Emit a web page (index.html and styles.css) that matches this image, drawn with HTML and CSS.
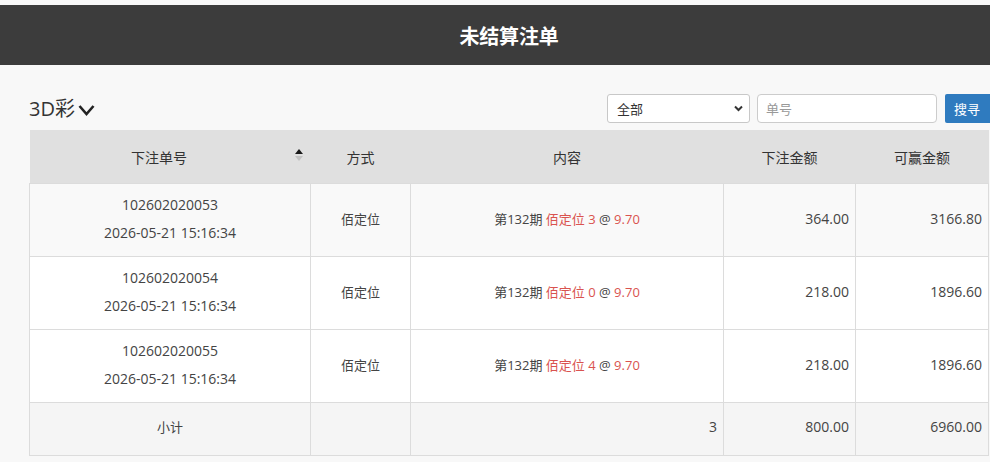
FILE: index.html
```html
<!DOCTYPE html>
<html lang="zh-CN">
<head>
<meta charset="utf-8">
<title>未结算注单</title>
<link rel="stylesheet" href="styles.css">
</head>
<body>
<header class="topbar"><h1 class="topbar-title">未结算注单</h1></header>
<main class="page">
  <div class="toolbar">
    <div class="game-title">3D彩<svg class="chev" width="17" height="12" viewBox="0 0 17 12"><polyline points="1.5,2 8.5,10 15.5,2" fill="none" stroke="#222" stroke-width="2.6" stroke-linejoin="miter"/></svg></div>
    <div class="controls">
      <div class="select"><span>全部</span><svg width="9" height="7" viewBox="0 0 9 7"><polyline points="1,1.5 4.5,5 8,1.5" fill="none" stroke="#333" stroke-width="2"/></svg></div>
      <div class="input"><span>单号</span></div>
      <button class="btn">搜寻</button>
    </div>
  </div>
  <table class="bets">
    <colgroup>
      <col class="c1"><col class="c2"><col class="c3"><col class="c4"><col class="c5">
    </colgroup>
    <thead>
      <tr>
        <th class="sortable">下注单号<span class="sort"><i class="up"></i><i class="down"></i></span></th>
        <th>方式</th>
        <th>内容</th>
        <th>下注金额</th>
        <th>可赢金额</th>
      </tr>
    </thead>
    <tbody>
      <tr class="shade">
        <td class="id">102602020053<br>2026-05-21 15:16:34</td>
        <td class="small">佰定位</td>
        <td class="small">第132期 <span class="red">佰定位 3</span> @ <span class="red">9.70</span></td>
        <td class="num">364.00</td>
        <td class="num">3166.80</td>
      </tr>
      <tr>
        <td class="id">102602020054<br>2026-05-21 15:16:34</td>
        <td class="small">佰定位</td>
        <td class="small">第132期 <span class="red">佰定位 0</span> @ <span class="red">9.70</span></td>
        <td class="num">218.00</td>
        <td class="num">1896.60</td>
      </tr>
      <tr>
        <td class="id">102602020055<br>2026-05-21 15:16:34</td>
        <td class="small">佰定位</td>
        <td class="small">第132期 <span class="red">佰定位 4</span> @ <span class="red">9.70</span></td>
        <td class="num">218.00</td>
        <td class="num">1896.60</td>
      </tr>
      <tr class="total">
        <td class="small">小计</td>
        <td></td>
        <td class="num">3</td>
        <td class="num">800.00</td>
        <td class="num">6960.00</td>
      </tr>
    </tbody>
  </table>
</main>
</body>
</html>
```
FILE: styles.css
```css
html, body {
  margin: 0;
  padding: 0;
  background: #f8f8f8;
  font-family: "Open Sans", "Noto Sans CJK SC", sans-serif;
  color: #333;
  overflow: hidden;
}
.topbar {
  margin-top: 5px;
  height: 60px;
  background: #3c3c3c;
  display: flex;
  align-items: center;
  justify-content: center;
  padding-left: 28px;
}
.topbar-title {
  margin: 0;
  color: #fff;
  font-size: 20px;
  font-weight: bold;
  letter-spacing: -0.2px;
}
.page {
  padding: 0 2px 0 29px;
}
.toolbar {
  display: flex;
  align-items: center;
  justify-content: space-between;
  margin-right: -3px;
  padding-top: 29px;
  padding-bottom: 7px;
}
.game-title {
  font-size: 20px;
  line-height: 24px;
  color: #333;
  display: flex;
  align-items: center;
  margin-top: 1px;
}
.chev { margin-left: 3px; margin-top: 1px; }
.controls {
  display: flex;
  align-items: center;
}
.select {
  box-sizing: border-box;
  width: 143px;
  height: 29px;
  background: #fff;
  border: 1px solid #c8c8c8;
  border-radius: 3px;
  display: flex;
  align-items: center;
  justify-content: space-between;
  padding: 0 6px 0 9px;
  font-size: 13px;
}
.input {
  box-sizing: border-box;
  width: 180px;
  height: 29px;
  margin-left: 7px;
  background: #fff;
  border: 1px solid #ccc;
  border-radius: 4px;
  display: flex;
  align-items: center;
  padding-left: 8px;
  font-size: 13px;
  color: #999;
}
.btn {
  margin-left: 8px;
  height: 29px;
  width: 46px;
  border: none;
  border-radius: 2px 0 0 2px;
  background: #2f7bbf;
  color: #fff;
  font-family: inherit;
  font-size: 13px;
  text-align: left;
  padding: 0 0 0 9px;
}
.bets {
  width: 959px;
  border-collapse: collapse;
  table-layout: fixed;
  font-size: 14px;
}
.c1 { width: 281px; }
.c2 { width: 100px; }
.c3 { width: 313px; }
.c4 { width: 132px; }
.c5 { width: 133px; }
.bets th {
  background: #e0e0e0;
  font-weight: normal;
  height: 53px;
  padding: 0;
  text-align: center;
  color: #333;
}
.bets th.sortable {
  position: relative;
  padding-right: 22px;
}
.sort {
  position: absolute;
  right: 8px;
  top: 19px;
  display: flex;
  flex-direction: column;
  gap: 2px;
}
.sort i {
  width: 0;
  height: 0;
  border-left: 4px solid transparent;
  border-right: 4px solid transparent;
}
.sort .up { border-bottom: 5px solid #1a1a1a; }
.sort .down { border-top: 5px solid #c2c2c2; }
.bets td {
  background: #fff;
  border: 1px solid #dcdcdc;
  text-align: center;
  padding: 7px 6px 9px;
  line-height: 28px;
  height: 56px;
  color: #444;
}
.bets tr.shade td { background: #f9f9f9; }
.bets tr.total td {
  background: #f5f5f5;
  height: 36px;
  padding-top: 6px;
  padding-bottom: 10px;
}
.bets td.small { font-size: 13px; }
.bets td.num { text-align: right; }
.red { color: #d9534f; }
```
